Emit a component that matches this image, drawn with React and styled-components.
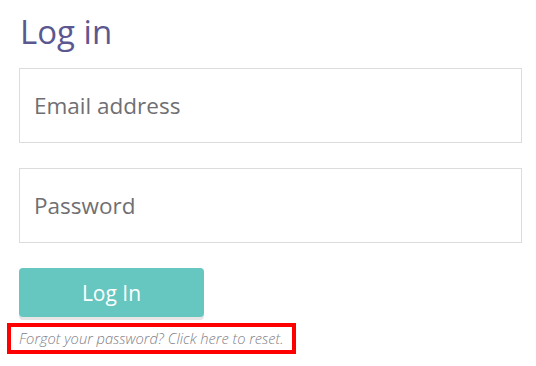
import React from 'react'
import styled, { createGlobalStyle } from 'styled-components'

const GlobalStyle = createGlobalStyle`
  body {
    margin: 0;
    background: #fff;
    font-family: "Open Sans", "Noto Sans", sans-serif;
  }
`

const App = () => {
    return (
        <Wrapper>
            <GlobalStyle />
            <Title>Log in</Title>
            <Form>
                <Field type="email" placeholder="Email address" />
                <Field type="password" placeholder="Password" />
                <LoginButton type="button">Log In</LoginButton>
            </Form>
            <Forgot>Forgot your password? Click here to reset.</Forgot>
        </Wrapper>
    )
}

export default App

const Wrapper = styled.div`
  padding: 10px 14px 0 19px;
`

const Title = styled.h1`
  margin: 0 0 14px 1px;
  font-size: 33px;
  font-weight: 400;
  line-height: 44px;
  color: #5b5891;
`

const Form = styled.form`
  display: flex;
  flex-direction: column;
  align-items: flex-start;
  gap: 25px;
`

const Field = styled.input`
  box-sizing: border-box;
  width: 503px;
  height: 75px;
  padding: 0 14px;
  border: 1px solid #dcdcdc;
  border-radius: 0;
  font-family: "Open Sans", sans-serif;
  font-size: 22.5px;
  color: #555;
  outline: none;

  &::placeholder {
    color: #6f6f73;
  }
`

const LoginButton = styled.button`
  width: 185px;
  height: 49px;
  border: none;
  border-radius: 4px;
  background: #66c6c0;
  box-shadow: 0 3px 0 #e6e6e6;
  color: #fff;
  font-family: "Open Sans", sans-serif;
  font-size: 21px;
  padding: 0;
`

const Forgot = styled.p`
  display: inline-block;
  margin: 6px 0 0 -12px;
  padding: 0 8px;
  border: 4px solid #ff0000;
  font-size: 14.7px;
  font-weight: 300;
  line-height: 23px;
  font-style: italic;
  color: #808088;
`
